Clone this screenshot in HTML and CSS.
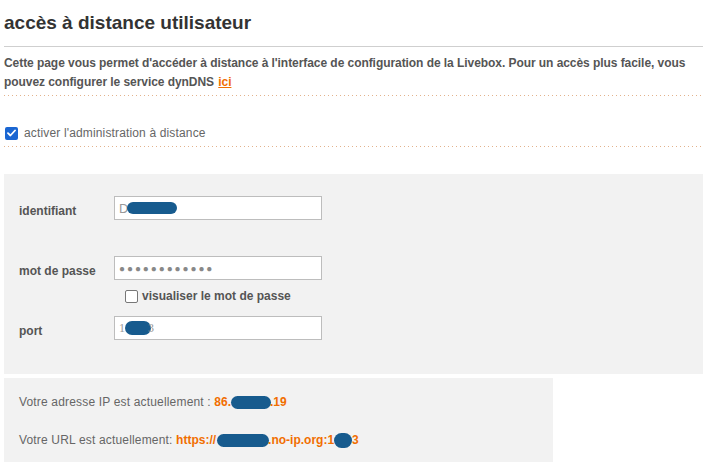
FILE: index.html
```html
<!DOCTYPE html>
<html lang="fr">
<head>
<meta charset="utf-8">
<link rel="stylesheet" href="styles.css">
</head>
<body>
<div class="page">
  <h1 class="title">accès à distance utilisateur</h1>
  <p class="intro">Cette page vous permet d'accéder à distance à l'interface de configuration de la Livebox. Pour un accès plus facile, vous pouvez configurer le service dynDNS <a class="link" href="#">ici</a></p>
  <div class="activate">
    <span class="check checked"><svg width="9" height="8" viewBox="0 0 9 8"><path d="M1 4.2 L3.4 6.5 L8 1.5" fill="none" stroke="#fff" stroke-width="1.8" stroke-linecap="round" stroke-linejoin="round"/></svg></span>
    <span class="activate-label">activer l'administration à distance</span>
  </div>
  <div class="panel form">
    <div class="row">
      <span class="label">identifiant</span>
      <div class="field"><span class="val sans">D</span><span class="blob blob-id"></span></div>
    </div>
    <div class="row row-pass">
      <span class="label">mot de passe</span>
      <div class="field"><span class="dots">●●●●●●●●●●●●</span></div>
    </div>
    <div class="row row-show">
      <span class="label"></span>
      <div class="show"><span class="check empty"></span><span class="show-label">visualiser le mot de passe</span></div>
    </div>
    <div class="row row-port">
      <span class="label">port</span>
      <div class="field"><span class="val">1</span><span class="blob blob-port"></span><span class="val">3</span></div>
    </div>
  </div>
  <div class="panel info">
    <div class="info-line">Votre adresse IP est actuellement : <span class="hl">86.<span class="blob blob-ip"></span>.19</span></div>
    <div class="info-line">Votre URL est actuellement: <span class="hl">https://<span class="blob blob-url"></span>.no-ip.org:1<span class="blob blob-port2"></span>3</span></div>
  </div>
</div>
</body>
</html>
```
FILE: styles.css
```css
html, body {
  margin: 0;
  padding: 0;
  background: #fff;
}
body {
  font-family: "Liberation Sans", Arial, sans-serif;
  font-size: 12px;
  color: #5a5a5a;
}
.page {
  width: 699px;
  margin-left: 4px;
}
.title {
  margin: 0;
  padding-top: 12px;
  font-size: 19px;
  line-height: 22px;
  font-weight: bold;
  color: #333;
  padding-bottom: 12px;
  border-bottom: 1px solid #cfcfcf;
}
.intro {
  margin: 0;
  padding: 7px 0 4px;
  font-weight: bold;
  line-height: 19px;
  letter-spacing: -0.06px;
  color: #555;
  background-image: linear-gradient(to right, #e3b28c 1px, transparent 1px);
  background-size: 4px 1px;
  background-repeat: repeat-x;
  background-position: 0 100%;
}
.link {
  color: #f16e00;
  text-decoration: underline;
  margin-left: 1px;
}
.activate {
  display: flex;
  align-items: center;
  gap: 6px;
  height: 28px;
  margin-top: 23px;
  padding-left: 1px;
  padding-bottom: 0;
  background-image: linear-gradient(to right, #e3b28c 1px, transparent 1px);
  background-size: 4px 1px;
  background-repeat: repeat-x;
  background-position: 0 100%;
}
.activate-label {
  color: #666;
  letter-spacing: 0.15px;
}
.check {
  box-sizing: border-box;
  width: 13px;
  height: 13px;
  border-radius: 2px;
  display: inline-flex;
  align-items: center;
  justify-content: center;
  flex: none;
}
.check.checked {
  background: #1a66d2;
}
.check.empty {
  border: 1.5px solid #777;
  background: #fff;
}
.panel {
  background: #f2f2f2;
}
.form {
  margin-top: 27px;
  padding: 22px 0 34px 15px;
  display: flex;
  flex-direction: column;
}
.row {
  display: flex;
  align-items: center;
}
.label {
  width: 95px;
  font-weight: bold;
  color: #555;
  flex: none;
  padding-top: 5px;
}
.field {
  box-sizing: border-box;
  width: 208px;
  height: 24px;
  border: 1px solid #bdbdbd;
  background: #fff;
  display: flex;
  align-items: center;
  padding-left: 4px;
  color: #999;
  font-size: 12px;
}
.row-pass { margin-top: 36px; }
.row-show { margin-top: 9px; height: 14px; }
.row-show .label { padding-top: 0; }
.row-port { margin-top: 13px; }
.show {
  display: flex;
  align-items: center;
  gap: 4px;
  margin-left: 11px;
}
.show-label {
  font-weight: bold;
  color: #555;
}
.dots {
  font-size: 10px;
  letter-spacing: 1.9px;
  color: #888;
}
.val {
  font-family: "Liberation Serif", serif;
  color: #999;
}
.val.sans {
  font-family: "Liberation Sans", Arial, sans-serif;
  font-size: 13px;
}
.blob {
  display: inline-block;
  background: #175b8e;
  border-radius: 8px;
  vertical-align: middle;
}
.blob-id { width: 50px; height: 12px; margin-left: -1px; }
.blob-port { width: 26px; height: 14px; margin-left: 0; margin-right: -3px; }
.blob-ip { width: 40px; height: 13px; margin: 0 -1px 0 0; }
.blob-url { width: 52px; height: 13px; margin: 0 -1px 0 1px; }
.blob-port2 { width: 18px; height: 15px; margin: 0; }
.info {
  margin-top: 4px;
  width: 549px;
  padding: 14px 0 16px 15px;
  height: 85px;
  box-sizing: border-box;
}
.info-line {
  line-height: 20px;
  color: #666;
  letter-spacing: 0.17px;
}
.info-line + .info-line {
  margin-top: 18px;
}
.hl {
  color: #f16e00;
  font-weight: bold;
  letter-spacing: 0;
}
```
